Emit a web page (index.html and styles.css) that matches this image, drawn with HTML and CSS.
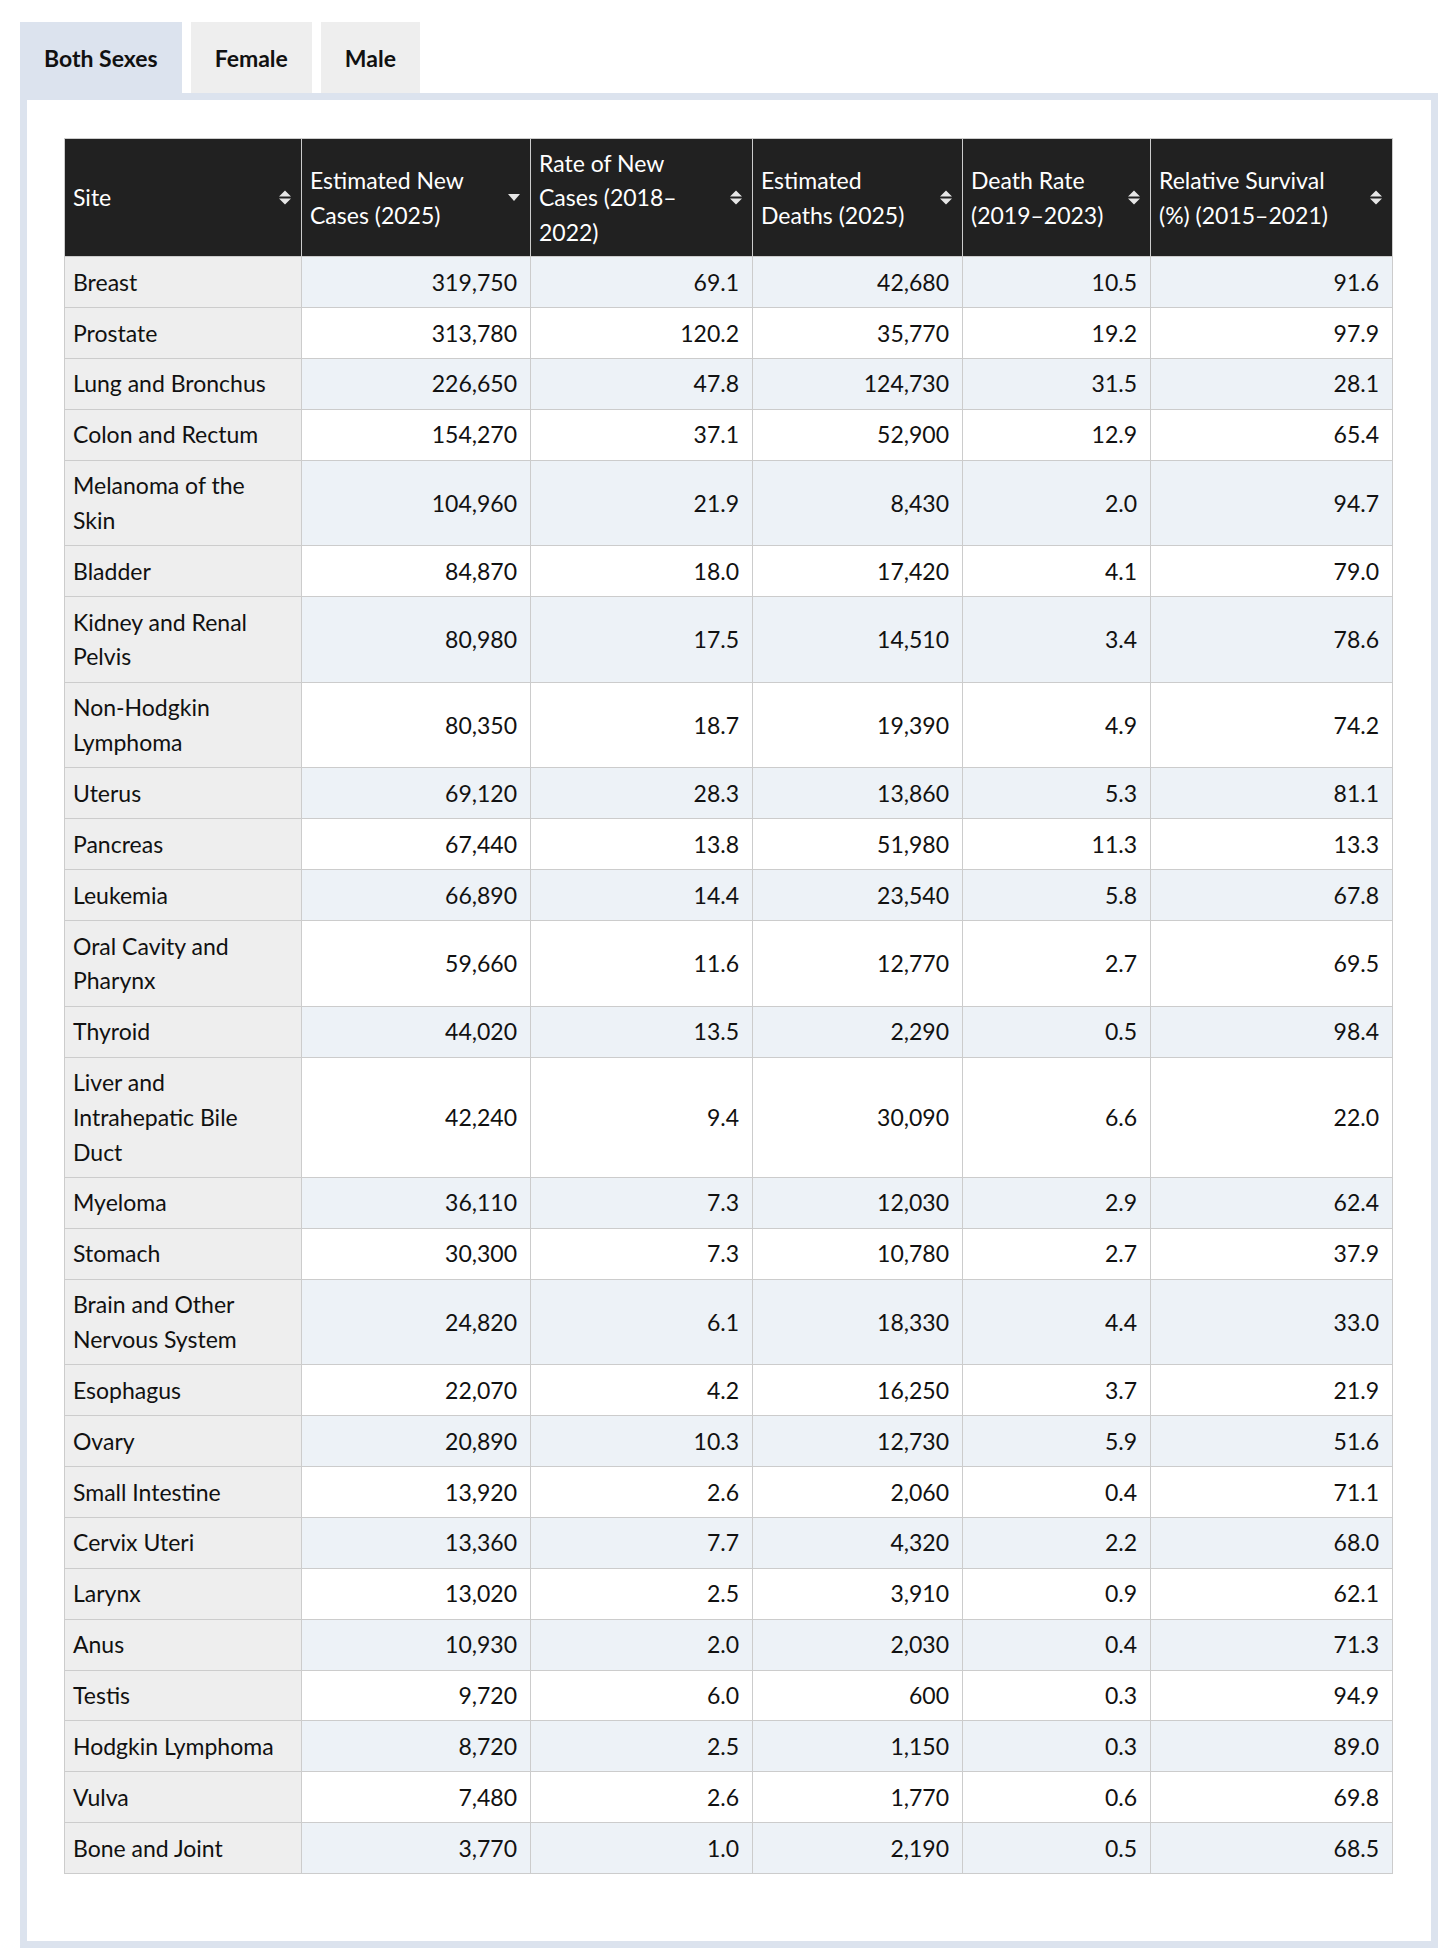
FILE: index.html
```html
<!DOCTYPE html>
<html lang="en">
<head>
<meta charset="utf-8">
<title>Cancer Statistics</title>
<link rel="stylesheet" href="styles.css">
</head>
<body>
<div class="wrap">
  <div class="tabs">
    <div class="tab active">Both Sexes</div>
    <div class="tab">Female</div>
    <div class="tab">Male</div>
  </div>
  <div class="panel">
    <table class="stats">
      <colgroup>
        <col class="c1"><col class="c2"><col class="c3"><col class="c4"><col class="c5"><col class="c6">
      </colgroup>
      <thead>
        <tr>
          <th><div class="th-in"><span>Site</span><svg class="sort" viewBox="0 0 12 15" width="12" height="15"><path d="M0 6.5L6 0.5L12 6.5Z M0 8.5L12 8.5L6 14.5Z"/></svg></div></th>
          <th><div class="th-in"><span>Estimated New Cases (2025)</span><svg class="sort" viewBox="0 0 12 15" width="12" height="15"><path d="M0 4L12 4L6 11Z"/></svg></div></th>
          <th><div class="th-in"><span>Rate of New Cases (2018–2022)</span><svg class="sort" viewBox="0 0 12 15" width="12" height="15"><path d="M0 6.5L6 0.5L12 6.5Z M0 8.5L12 8.5L6 14.5Z"/></svg></div></th>
          <th><div class="th-in"><span>Estimated Deaths (2025)</span><svg class="sort" viewBox="0 0 12 15" width="12" height="15"><path d="M0 6.5L6 0.5L12 6.5Z M0 8.5L12 8.5L6 14.5Z"/></svg></div></th>
          <th><div class="th-in"><span>Death Rate (2019–2023)</span><svg class="sort" viewBox="0 0 12 15" width="12" height="15"><path d="M0 6.5L6 0.5L12 6.5Z M0 8.5L12 8.5L6 14.5Z"/></svg></div></th>
          <th><div class="th-in"><span>Relative Survival (%) (2015–2021)</span><svg class="sort" viewBox="0 0 12 15" width="12" height="15"><path d="M0 6.5L6 0.5L12 6.5Z M0 8.5L12 8.5L6 14.5Z"/></svg></div></th>
        </tr>
      </thead>
      <tbody>
        <tr><td>Breast</td><td>319,750</td><td>69.1</td><td>42,680</td><td>10.5</td><td>91.6</td></tr>
        <tr><td>Prostate</td><td>313,780</td><td>120.2</td><td>35,770</td><td>19.2</td><td>97.9</td></tr>
        <tr><td>Lung and Bronchus</td><td>226,650</td><td>47.8</td><td>124,730</td><td>31.5</td><td>28.1</td></tr>
        <tr><td>Colon and Rectum</td><td>154,270</td><td>37.1</td><td>52,900</td><td>12.9</td><td>65.4</td></tr>
        <tr><td>Melanoma of the<br>Skin</td><td>104,960</td><td>21.9</td><td>8,430</td><td>2.0</td><td>94.7</td></tr>
        <tr><td>Bladder</td><td>84,870</td><td>18.0</td><td>17,420</td><td>4.1</td><td>79.0</td></tr>
        <tr><td>Kidney and Renal<br>Pelvis</td><td>80,980</td><td>17.5</td><td>14,510</td><td>3.4</td><td>78.6</td></tr>
        <tr><td>Non-Hodgkin<br>Lymphoma</td><td>80,350</td><td>18.7</td><td>19,390</td><td>4.9</td><td>74.2</td></tr>
        <tr><td>Uterus</td><td>69,120</td><td>28.3</td><td>13,860</td><td>5.3</td><td>81.1</td></tr>
        <tr><td>Pancreas</td><td>67,440</td><td>13.8</td><td>51,980</td><td>11.3</td><td>13.3</td></tr>
        <tr><td>Leukemia</td><td>66,890</td><td>14.4</td><td>23,540</td><td>5.8</td><td>67.8</td></tr>
        <tr><td>Oral Cavity and<br>Pharynx</td><td>59,660</td><td>11.6</td><td>12,770</td><td>2.7</td><td>69.5</td></tr>
        <tr><td>Thyroid</td><td>44,020</td><td>13.5</td><td>2,290</td><td>0.5</td><td>98.4</td></tr>
        <tr><td>Liver and<br>Intrahepatic Bile<br>Duct</td><td>42,240</td><td>9.4</td><td>30,090</td><td>6.6</td><td>22.0</td></tr>
        <tr><td>Myeloma</td><td>36,110</td><td>7.3</td><td>12,030</td><td>2.9</td><td>62.4</td></tr>
        <tr><td>Stomach</td><td>30,300</td><td>7.3</td><td>10,780</td><td>2.7</td><td>37.9</td></tr>
        <tr><td>Brain and Other<br>Nervous System</td><td>24,820</td><td>6.1</td><td>18,330</td><td>4.4</td><td>33.0</td></tr>
        <tr><td>Esophagus</td><td>22,070</td><td>4.2</td><td>16,250</td><td>3.7</td><td>21.9</td></tr>
        <tr><td>Ovary</td><td>20,890</td><td>10.3</td><td>12,730</td><td>5.9</td><td>51.6</td></tr>
        <tr><td>Small Intestine</td><td>13,920</td><td>2.6</td><td>2,060</td><td>0.4</td><td>71.1</td></tr>
        <tr><td>Cervix Uteri</td><td>13,360</td><td>7.7</td><td>4,320</td><td>2.2</td><td>68.0</td></tr>
        <tr><td>Larynx</td><td>13,020</td><td>2.5</td><td>3,910</td><td>0.9</td><td>62.1</td></tr>
        <tr><td>Anus</td><td>10,930</td><td>2.0</td><td>2,030</td><td>0.4</td><td>71.3</td></tr>
        <tr><td>Testis</td><td>9,720</td><td>6.0</td><td>600</td><td>0.3</td><td>94.9</td></tr>
        <tr><td>Hodgkin Lymphoma</td><td>8,720</td><td>2.5</td><td>1,150</td><td>0.3</td><td>89.0</td></tr>
        <tr><td>Vulva</td><td>7,480</td><td>2.6</td><td>1,770</td><td>0.6</td><td>69.8</td></tr>
        <tr><td>Bone and Joint</td><td>3,770</td><td>1.0</td><td>2,190</td><td>0.5</td><td>68.5</td></tr>
      </tbody>
    </table>
  </div>
</div>
</body>
</html>
```

FILE: styles.css
```css
html, body {
  margin: 0;
  padding: 0;
  background: #fff;
}
body {
  font-family: Lato, "Noto Sans", sans-serif;
  color: #111;
}
.wrap {
  margin: 22px 18px 0 20px;
}
.tabs {
  display: flex;
  gap: 9px;
}
.tab {
  height: 71px;
  padding: 0 24px;
  display: flex;
  align-items: center;
  background: #eeeeee;
  font-size: 23px;
  font-weight: 700;
  color: #111;
}
.tab.active {
  background: #dce3ee;
}
.panel {
  border: 7px solid #dce3ee;
  background: #fff;
  padding: 38px 38px 67px 37px;
}
.stats {
  width: 1328px;
  border-collapse: collapse;
  table-layout: fixed;
  font-size: 23px;
  line-height: 34.7px;
}
.c1 { width: 237px; }
.c2 { width: 229px; }
.c3 { width: 222px; }
.c4 { width: 210px; }
.c5 { width: 188px; }
.c6 { width: 242px; }
.stats th {
  background: #212121;
  color: #fff;
  font-weight: 400;
  text-align: left;
  border: 1px solid #cccccc;
  padding: 6.5px 10px 6.5px 8px;
}
.th-in {
  display: flex;
  align-items: center;
  gap: 14px;
}
.th-in span {
  flex: 1;
}
.sort {
  flex: none;
  fill: #e6e6e6;
}
.stats td {
  border: 1px solid #cccccc;
  padding: 7.6px 13px 7.6px 8px;
  text-align: right;
  vertical-align: middle;
}
.stats td:first-child {
  text-align: left;
  background: #eeeeee;
}
.stats tbody tr:nth-child(odd) td {
  background: #edf2f7;
}
.stats tbody tr:nth-child(odd) td:first-child {
  background: #eeeeee;
}
```
